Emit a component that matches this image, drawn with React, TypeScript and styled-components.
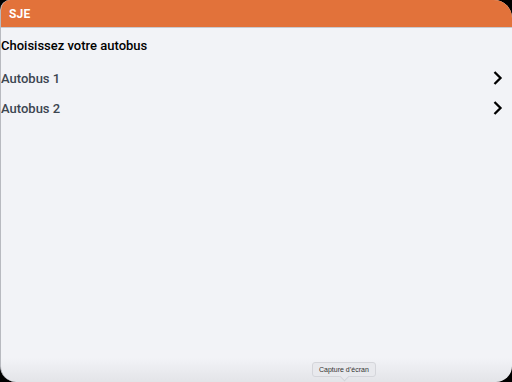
import { FC } from 'react';
import styled, { createGlobalStyle } from 'styled-components';

const GlobalStyle = createGlobalStyle`
  html, body {
    margin: 0;
    padding: 0;
    background: #000;
  }
  body {
    font-family: Roboto, 'Noto Sans', 'Liberation Sans', sans-serif;
  }
`;

const buses = ['Autobus 1', 'Autobus 2'];

const Chevron: FC = () => (
  <svg width='12' height='16' viewBox='0 0 12 16'>
    <path d='M2.5 2 L8.5 8 L2.5 14' fill='none' stroke='#000' strokeWidth='2.3' />
  </svg>
);

const App: FC = () => {
  return (
    <>
      <GlobalStyle />
      <Screen>
        <Header>
          <Brand>SJE</Brand>
        </Header>
        <Content>
          <Title>Choisissez votre autobus</Title>
          <BusList>
            {buses.map((bus) => (
              <BusRow key={bus}>
                <BusName>{bus}</BusName>
                <Chevron />
              </BusRow>
            ))}
          </BusList>
        </Content>
        <Tooltip>Capture d’écran</Tooltip>
      </Screen>
    </>
  );
};

export default App;

const Screen = styled.div`
  position: relative;
  display: flex;
  flex-direction: column;
  width: 512px;
  height: 382px;
  overflow: hidden;
  border-radius: 10px 18px 16px 16px;
  border-left: 1px solid #b8bac0;
  box-sizing: border-box;
  background: linear-gradient(to bottom, #f2f3f7 0, #f2f3f7 358px, #e3e4e8 382px);
`;

const Header = styled.div`
  display: flex;
  align-items: center;
  height: 27px;
  padding: 0 8px;
  background: #e2723a;
  border-bottom: 1px solid #c8cad0;
`;

const Brand = styled.span`
  color: #fff;
  font-size: 12px;
  font-weight: 700;
  letter-spacing: 0.2px;
`;

const Content = styled.div`
  display: flex;
  flex-direction: column;
  padding: 10px 8px 0 0;
`;

const Title = styled.div`
  font-size: 13px;
  font-weight: 500;
  color: #000;
  line-height: 16px;
  margin-bottom: 9px;
`;

const BusList = styled.div`
  display: flex;
  flex-direction: column;
`;

const BusRow = styled.div`
  display: flex;
  align-items: center;
  justify-content: space-between;
  height: 30px;
`;

const BusName = styled.span`
  font-size: 13px;
  font-weight: 500;
  color: #3c4550;
`;

const Tooltip = styled.div`
  position: absolute;
  left: 311px;
  top: 362px;
  padding: 1px 6px;
  font-family: 'Liberation Sans', sans-serif;
  font-size: 7px;
  line-height: 11px;
  color: #333;
  background: #e8e9ed;
  border: 1px solid #d4d5da;
  border-radius: 3px;

  &::after {
    content: '';
    position: absolute;
    left: 28px;
    bottom: -4px;
    width: 6px;
    height: 6px;
    background: #e8e9ed;
    border-right: 1px solid #d4d5da;
    border-bottom: 1px solid #d4d5da;
    transform: rotate(45deg);
  }
`;
